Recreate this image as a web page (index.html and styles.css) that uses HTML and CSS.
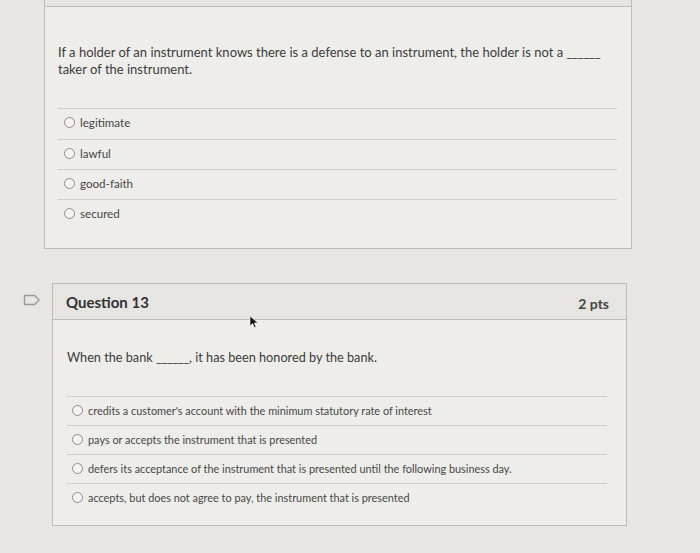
FILE: index.html
```html
<!DOCTYPE html>
<html>
<head>
<meta charset="utf-8">
<link rel="stylesheet" href="styles.css">
</head>
<body>
<div class="page">
  <div class="card card-12">
    <div class="card-head stub"></div>
    <div class="card-body">
      <p class="question">If a holder of an instrument knows there is a defense to an instrument, the holder is not a <span class="blank">______</span><br>taker of the instrument.</p>
      <ul class="answers">
        <li><span class="radio"></span>legitimate</li>
        <li><span class="radio"></span>lawful</li>
        <li><span class="radio"></span>good-faith</li>
        <li><span class="radio"></span>secured</li>
      </ul>
    </div>
  </div>

  <div class="row-13">
    <div class="flag">
      <svg width="18" height="12" viewBox="0 0 18 12"><path d="M1.5 1.5 H11.5 L16.2 6 L11.5 10.5 H1.5 Z" fill="none" stroke="#9a9996" stroke-width="1.4" stroke-linejoin="round"/></svg>
    </div>
    <div class="card card-13">
      <div class="card-head">
        <span class="title">Question 13</span>
        <span class="pts">2 pts</span>
      </div>
      <div class="card-body">
        <p class="question q13">When the bank <span class="blank">______</span>, it has been honored by the bank.</p>
        <ul class="answers small">
          <li><span class="radio"></span>credits a customer's account with the minimum statutory rate of interest</li>
          <li><span class="radio"></span>pays or accepts the instrument that is presented</li>
          <li><span class="radio"></span>defers its acceptance of the instrument that is presented until the following business day.</li>
          <li><span class="radio"></span>accepts, but does not agree to pay, the instrument that is presented</li>
        </ul>
      </div>
    </div>
  </div>
  <svg class="cursor" width="12" height="14" viewBox="0 0 12 14"><path d="M1 1 L1 11 L3.6 8.6 L5.4 12.6 L7 11.9 L5.3 8 L9 8 Z" fill="#111" stroke="#fff" stroke-width="0.6"/></svg>
</div>
</body>
</html>
```

FILE: styles.css
```css
html, body {
  margin: 0;
  padding: 0;
}
body {
  background: #e7e6e2;
  font-family: Lato, "Open Sans", sans-serif;
  color: #3e3e3e;
  width: 700px;
  height: 553px;
  overflow: hidden;
}
.page {
  position: relative;
  height: 553px;
  display: flex;
  flex-direction: column;
}
.card {
  background: #eeede9;
  border: 1px solid #bdbcb8;
  box-sizing: border-box;
}
.card-12 {
  margin-top: -30px;
  margin-left: 44px;
  width: 588px;
  height: 279px;
  border-top: none;
}
.card-head {
  background: #e6e5e1;
  border-bottom: 1px solid #bdbcb8;
}
.card-head.stub {
  height: 36px;
}
.card-12 .card-body {
  padding: 37px 14px 0 13px;
}
.question {
  margin: 0;
  font-size: 13px;
  line-height: 17px;
  color: #3c3c3c;
}
.blank {
  letter-spacing: -0.3px;
}
.answers {
  list-style: none;
  margin: 30px 0 0 0;
  padding: 0;
}
.answers li {
  border-top: 1px solid #cfcecb;
  height: 30px;
  box-sizing: border-box;
  display: flex;
  align-items: center;
  padding-left: 6px;
  padding-bottom: 3px;
  font-size: 11.6px;
  color: #474747;
}
.answers li:first-child {
  height: 31px;
}
.radio {
  width: 9px;
  height: 9px;
  border: 1px solid #8d8c89;
  border-radius: 50%;
  background: #f4f3f0;
  margin-right: 5px;
  flex: none;
}
.row-13 {
  display: flex;
  align-items: flex-start;
  margin-top: 34px;
}
.flag {
  width: 52px;
  padding-top: 7px;
  box-sizing: border-box;
  padding-left: 23px;
}
.card-13 {
  width: 575px;
  height: 243px;
}
.card-13 .card-head {
  height: 36px;
  display: flex;
  align-items: center;
  justify-content: space-between;
  padding: 0 17px 0 13px;
  box-sizing: border-box;
}
.title {
  font-weight: 700;
  font-size: 15px;
  color: #333;
}
.pts {
  font-weight: 700;
  font-size: 14px;
  color: #444;
  padding-top: 3px;
}
.card-13 .card-body {
  padding: 29px 19px 0 14px;
}
.q13 {
  font-size: 12.7px;
}
.answers.small {
  margin-top: 30px;
}
.answers.small li {
  height: 29px;
  font-size: 10.9px;
  padding-left: 5px;
  padding-bottom: 2px;
}
.cursor {
  position: absolute;
  left: 249px;
  top: 315px;
}
```
